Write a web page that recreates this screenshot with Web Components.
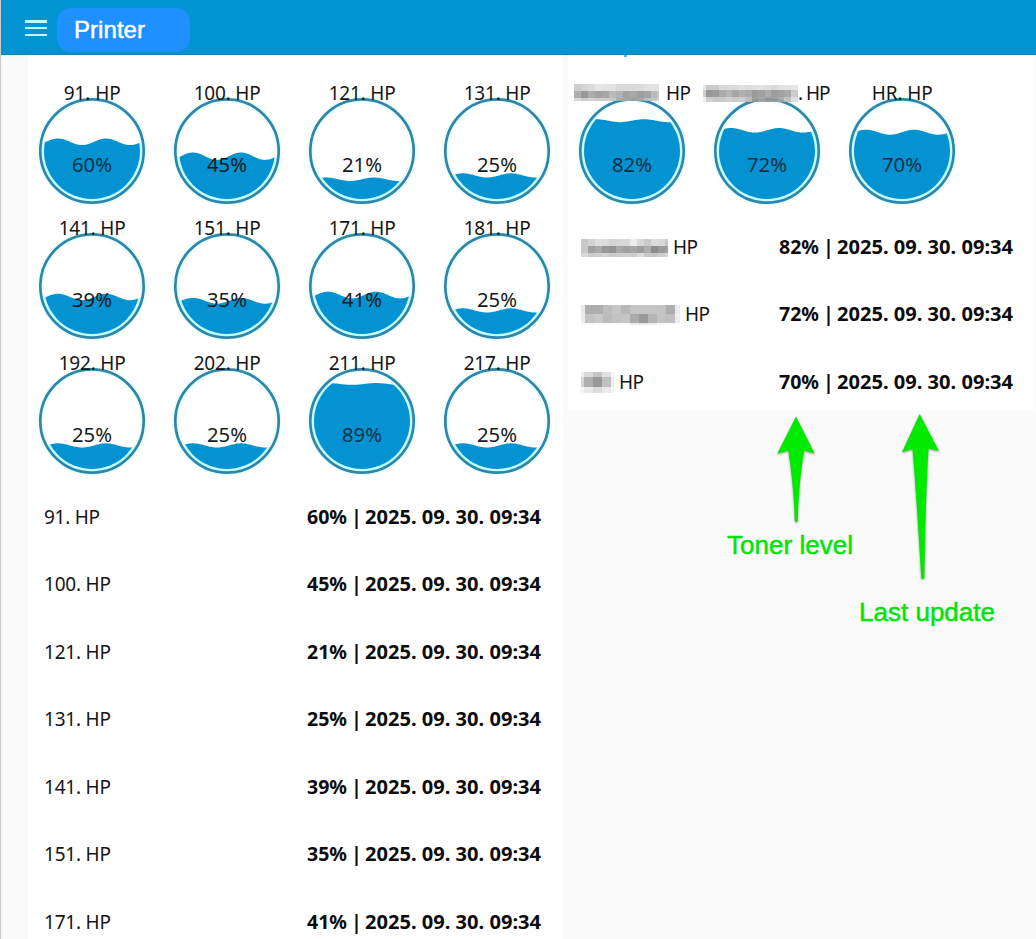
<!DOCTYPE html>
<html lang="en">
<head>
<meta charset="utf-8">
<title>Printer</title>
<style>
html,body{margin:0;height:100%;overflow:hidden;background:#fafafa}
body{font-family:"Noto Sans","Open Sans",sans-serif;font-size:19px;color:#151515}
</style>
</head>
<body>
<printer-page></printer-page>
<script>
const define = (name, render) => customElements.define(name, class extends HTMLElement {
  connectedCallback() {
    if (!this.shadowRoot) this.attachShadow({mode: 'open'}).innerHTML = render(this);
  }
});

// Each mosaic: column edges, row edges, and a grey level (hex digit pair) per tile.
const MOSAICS = {
  a: {x: [0,7,14,21,28,35,42,49,56,63,70,77,82.5,84.5], y: [0,7,13.5,17], rows: [
    'c8 d0 d8 e4 e0 df d5 d8 d9 d8 df df e0 f2', 'a6 8e a5 9a 9e b3 aa 99 9f 94 9b b4 c4 e4', 'd5 c7 cf c9 c8 c1 a9 a9 a6 a9 bb c1 d0 e8']},
  b: {x: [0,3,9.5,16,22.5,29,35.5,42,48.5,55,61.5,68,74.5,81,87.5,94.5], y: [0,5,11.5,17], rows: [
    'e6 c5 c7 d5 d8 d5 dc da dd e0 dc d8 de e0 e4', 'c9 8d 92 a1 ad 9d a8 a1 91 96 a5 94 98 a1 c7', 'ee c9 c1 c5 cc c6 c9 b7 97 a3 99 98 a5 bb dc']},
  c: {x: [0,6.7,13.7,20.7,27.7,34.7,41.7,48.7,55.7,62.7,69.7,76.7,83.7,86.5], y: [0,6.5,13.5,18.5], rows: [
    'c9 d3 df dc d4 d6 d8 eb d8 cb dc d8 c7 ee', 'c7 a1 aa 98 93 a8 a1 a6 9c ad 8d 9a a1 dc', 'd8 ca cf d4 c9 cc d0 cd dc c8 c6 cc d6 eb']},
  d: {x: [0,4,13,22,31,40,49,58,67,76,85,94,99], y: [0,9,18,20], rows: [
    'e9 ad ad bd c6 b8 c4 c4 c5 c3 ad eb ee', 'ec c2 c8 bb c2 c5 aa 99 b5 c3 c0 ef f4', 'fa fa fa fa fa fa ed e6 ef fa fa fa fa']},
  e: {x: [0,3,12,21,30,33], y: [0,5,14.5,21], rows: ['ee db c6 df f5', 'd5 ae 98 c0 ee', 'f4 e8 dc ea f8']}
};
define('redacted-text', el => {
  const m = MOSAICS[el.getAttribute('kind')];
  let tiles = '';
  m.rows.forEach((r, j) => r.split(' ').forEach((g, i) => {
    if (m.x[i + 1] === undefined) return;
    tiles += `<rect x="${m.x[i]}" y="${m.y[j]}" width="${m.x[i+1]-m.x[i]+.1}" height="${m.y[j+1]-m.y[j]+.1}" fill="#${g}${g}${g}"/>`;
  }));
  const w = m.x.at(-1), h = m.y.at(-1);
  return `<style>:host{display:block;width:${w}px;height:${h}px}svg{display:block}</style><svg width="${w}" height="${h}" shape-rendering="crispEdges">${tiles}</svg>`;
});

// Round tank whose liquid surface is a sine wave, flattest near empty and full.
define('level-gauge', el => {
  const v = +el.getAttribute('value'), label = el.getAttribute('label') || '';
  const phase = +(el.getAttribute('phase') || 14), cx = 53, cy = 68;
  const level = cy + 48.4 - 0.96 * v, amp = 4.1 * (1 - Math.abs(v - 50) / 50);
  const pts = [];
  for (let x = 3; x <= 103; x++) pts.push(`${x},${(level - amp * Math.cos((x - cx - phase) / 48 * 2 * Math.PI)).toFixed(2)}`);
  const wave = `M${pts.join('L')}L103,125L3,125Z`;
  const redact = el.getAttribute('redact');
  const width = label[0] === 'H' ? 61 : label.length === 6 ? 57 : 67;
  const text = redact
    ? `<text x="${el.getAttribute('hpx')}" y="16.5" textLength="${label.length > 2 ? 32.5 : 25}">${label}</text>`
    : `<text x="53.2" y="16.5" text-anchor="middle" textLength="${width}">${label}</text>`;
  return `<style>
    :host{display:block;position:relative;width:106px;height:121px}
    svg{display:block;overflow:visible} text{font:19px "Noto Sans",sans-serif;fill:#151515}
    .pct{font-size:19.8px;fill:${v > 55 ? '#12304a' : '#151a20'}}
    redacted-text{position:absolute;top:${redact === 'b' ? 2 : 1}px;left:${redact === 'b' ? -11 : -5}px;opacity:.9}
  </style><svg width="106" height="121">
    <defs><clipPath id="w"><path d="${wave}"/></clipPath></defs>
    <circle cx="${cx}" cy="${cy}" r="51.5" fill="none" stroke="#edffff" stroke-width="7"/>
    <circle cx="${cx}" cy="${cy}" r="49" fill="none" stroke="#c2ffff" stroke-width="3" clip-path="url(#w)"/>
    <circle cx="${cx}" cy="${cy}" r="51.7" fill="none" stroke="#2f86a8" stroke-width="2.7"/>
    <circle cx="${cx}" cy="${cy}" r="48" fill="#0493d0" clip-path="url(#w)"/>
    ${text}<text class="pct" x="53" y="88.7" text-anchor="middle" textLength="40" lengthAdjust="spacingAndGlyphs">${v}%</text>
  </svg>${redact ? `<redacted-text kind="${redact}"></redacted-text>` : ''}`;
});

define('toner-row', el => `<style>
  :host{display:flex;height:67.5px;align-items:center;justify-content:space-between;white-space:pre}
  .name{display:flex;align-items:center;gap:5px}
  svg{display:block;overflow:visible}
  text{font:19px "Noto Sans",sans-serif;fill:#151515} .v{font-weight:700;fill:#0c0c0c}
</style><span class="name"><slot></slot><svg width="68" height="26"><text y="19" textLength="${{2: 25, 6: 56, 7: 67}[el.getAttribute('name').length]}">${el.getAttribute('name')}</text></svg></span>
<svg width="234" height="26"><text class="v" y="19" textLength="40" lengthAdjust="spacingAndGlyphs">${el.getAttribute('value')}%</text><text class="v" x="44.3" y="19">|</text><text class="v" x="58" y="19" textLength="176" lengthAdjust="spacingAndGlyphs">2025. 09. 30. 09:34</text></svg>`);

define('app-header', () => `<style>
  :host{display:flex;box-sizing:border-box;height:55px;padding:8px 0 0 24px;background:#0294d0;border-bottom:1px solid #187fa9;box-shadow:0 1px 2px #d7fbff}
  .menu{display:flex;flex-direction:column;gap:5px;width:22px;padding-top:12px}
  .menu i{display:block;height:2px;background:#b9fbff}.menu i:first-child{height:3px}
  .menu i:first-child{margin-bottom:-1px}
  .pill{width:133px;height:44px;margin-left:10px;border-radius:14px;background:#1e90ff}
  text{font:24px "Liberation Sans",Arial,sans-serif;fill:#fff;stroke:#fff;stroke-width:.5px}
</style><div class="menu"><i></i><i></i><i></i></div>
<svg class="pill"><text x="17" y="30" textLength="71">Printer</text></svg>`);

define('gauge-panel', () => `<style>
  :host{display:block;box-sizing:border-box;background:#fff}
  .gauges{display:grid;grid-template-columns:repeat(var(--cols),106px);gap:14px 29px;padding:28px 0 0 11px}
  .rows{padding:var(--rows-pad)}
</style><div class="gauges"><slot name="gauge"></slot></div><div class="rows"><slot></slot></div>`);

define('callout-notes', () => `<style>
  :host{display:block} svg{display:block;overflow:visible}
  path{fill:#00ea00;filter:drop-shadow(0 1px 1px #0006)}
  text{font:26px "Liberation Sans",Arial,sans-serif;fill:#00e408;stroke:#00e408;stroke-width:.5px}
</style><svg width="326" height="240">
  <path d="M86 16.5L104.7 53.5L94.3 50.5C90 75 88.5 96 87.8 121Q86.3 123 84.8 121C84 96 82 75 78.3 50.5L67.3 53.8Z"/>
  <path d="M209.7 14L229 51L218.5 48.5C216 90 215 140 214.4 178Q212.8 180 211.3 178C209 140 206 90 202.5 49L192 52.3Z"/>
  <text x="17" y="154" textLength="126">Toner level</text><text x="149" y="220.8" textLength="136">Last update</text>
</svg>`);

define('printer-page', () => {
  const left = [[91,60],[100,45],[121,21],[131,25],[141,39],[151,35],[171,41],[181,25],[192,25],[202,25],[211,89],[217,25]];
  const visibleRows = left.slice(0, 7);
  return `<style>
    :host{display:block;position:relative;box-sizing:border-box;width:1036px;height:939px;overflow:hidden;border-left:1px solid #c9c9c9;background:#fafafa}
    main{display:flex;gap:6px;align-items:flex-start;padding-left:27px}
    .l{--cols:4;--rows-pad:10px 0 0 16px;width:534px;min-height:884px}
    .l toner-row{width:497px}
    .r{--cols:3;--rows-pad:10px 0 0 13px;width:467px;height:356px}
    .r toner-row{width:432px}
    callout-notes{position:absolute;left:709px;top:400px}
    .tick{position:absolute;left:623px;top:55px;width:3px;height:2px;background:#58bde0}
  </style><app-header></app-header><main>
    <gauge-panel class="l">${left.map(([n, v]) => `<level-gauge slot="gauge" label="${n}. HP" value="${v}"${v === 21 ? ' phase="12"' : ''}></level-gauge>`).join('')}
      ${visibleRows.map(([n, v]) => `<toner-row name="${n}. HP" value="${v}"></toner-row>`).join('')}</gauge-panel>
    <gauge-panel class="r">
      <level-gauge slot="gauge" label="HP" value="82" redact="a" hpx="87" phase="12"></level-gauge>
      <level-gauge slot="gauge" label=". HP" value="72" redact="b" hpx="84" phase="12"></level-gauge>
      <level-gauge slot="gauge" label="HR. HP" value="70" phase="12"></level-gauge>
      <toner-row name="HP" value="82"><redacted-text kind="c"></redacted-text></toner-row>
      <toner-row name="HP" value="72"><redacted-text kind="d"></redacted-text></toner-row>
      <toner-row name="HP" value="70"><redacted-text kind="e"></redacted-text></toner-row>
    </gauge-panel>
  </main><div class="tick"></div><callout-notes></callout-notes>`;
});
</script>
</body>
</html>
